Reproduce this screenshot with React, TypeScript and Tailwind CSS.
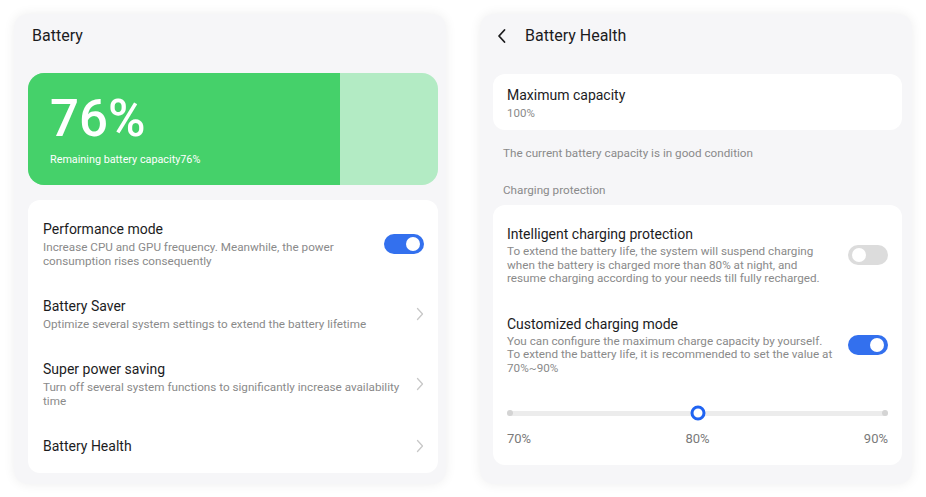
import React from "react";

const font = { fontFamily: "Roboto, 'Noto Sans', sans-serif" };

function Toggle({ on }: { on: boolean }) {
  return (
    <div
      className={`relative h-[20px] w-[40px] shrink-0 rounded-full ${
        on ? "bg-[#3370ee]" : "bg-[#dcdcdc]"
      }`}
    >
      <div
        className={`absolute top-[3px] h-[14px] w-[14px] rounded-full bg-white ${
          on ? "right-[4px]" : "left-[4px]"
        }`}
      />
    </div>
  );
}

function Chevron() {
  return (
    <svg width="8" height="14" viewBox="0 0 8 14" className="shrink-0">
      <path d="M1.5 1.5 L6.5 7 L1.5 12.5" fill="none" stroke="#c8c8c8" strokeWidth="1.3" strokeLinecap="round" strokeLinejoin="round" />
    </svg>
  );
}

function Row({
  title,
  sub,
  right,
}: {
  title: string;
  sub?: React.ReactNode;
  right: React.ReactNode;
}) {
  return (
    <div className="flex items-center justify-between">
      <div className="w-[365px]">
        <div className="text-[14px] leading-[18px] text-[#1c1c1e]">{title}</div>
        {sub && (
          <div className="mt-[2px] text-[11.7px] leading-[14px] text-[#8a8a8a]">{sub}</div>
        )}
      </div>
      {right}
    </div>
  );
}

export default function App() {
  return (
    <div className="flex h-[497px] w-[926px] gap-[34px] bg-white p-[14px] pb-[13px]" style={font}>
      {/* Left panel */}
      <div className="flex w-[432px] flex-col rounded-[14px] bg-[#f6f6f8] pl-[14px] pr-[8px] shadow-[0_0_12px_rgba(0,0,0,0.07)]">
        <div className="flex h-[44px] items-center pl-[4px] text-[16px] text-[#1c1c1e]">Battery</div>
        <div className="mt-[15px] flex h-[112px] overflow-hidden rounded-[16px] bg-[#b3ebc4]">
          <div className="w-[312px] bg-[#45d16a] pl-[22px] pt-[20px] text-white">
            <div className="text-[51px] font-medium leading-[52px]">76%</div>
            <div className="mt-[8px] text-[10.8px] leading-[14px]">Remaining battery capacity76%</div>
          </div>
        </div>
        <div className="mt-[15px] flex flex-col gap-[29px] rounded-[12px] bg-white pb-[18px] pl-[15px] pr-[14px] pt-[20px]">
          <Row
            title="Performance mode"
            sub={
              <>
                Increase CPU and GPU frequency. Meanwhile, the power
                <br />
                consumption rises consequently
              </>
            }
            right={<Toggle on />}
          />
          <Row
            title="Battery Saver"
            sub="Optimize several system settings to extend the battery lifetime"
            right={<Chevron />}
          />
          <Row
            title="Super power saving"
            sub={
              <>
                Turn off several system functions to significantly increase availability
                <br />
                time
              </>
            }
            right={<Chevron />}
          />
          <Row title="Battery Health" right={<Chevron />} />
        </div>
      </div>

      {/* Right panel */}
      <div className="flex w-[432px] flex-col rounded-[14px] bg-[#f6f6f8] pl-[13px] pr-[10px] shadow-[0_0_12px_rgba(0,0,0,0.07)]">
        <div className="flex h-[44px] items-center gap-[18px] pl-[4px] text-[16px] text-[#1c1c1e]">
          <svg width="10" height="16" viewBox="0 0 10 16">
            <path d="M7.5 2 L2 8 L7.5 14" fill="none" stroke="#1c1c1e" strokeWidth="1.8" strokeLinecap="round" strokeLinejoin="round" />
          </svg>
          <span>Battery Health</span>
        </div>
        <div className="mt-[16px] rounded-[12px] bg-white px-[14px] pb-[10px] pt-[12px]">
          <div className="text-[14px] leading-[18px] text-[#1c1c1e]">Maximum capacity</div>
          <div className="mt-[2px] text-[11.5px] leading-[14px] text-[#8a8a8a]">100%</div>
        </div>
        <div className="mt-[16px] pl-[10px] text-[11.7px] leading-[14px] text-[#8a8a8a]">
          The current battery capacity is in good condition
        </div>
        <div className="mt-[23px] pl-[10px] text-[11.7px] leading-[14px] text-[#8a8a8a]">Charging protection</div>
        <div className="mt-[8px] flex flex-col rounded-[12px] bg-white pb-[18px] pl-[14px] pr-[14px] pt-[20px]">
          <div className="flex items-center justify-between">
            <div className="w-[330px]">
              <div className="text-[14px] leading-[18px] text-[#1c1c1e]">Intelligent charging protection</div>
              <div className="mt-[2px] text-[11.7px] leading-[13.5px] text-[#8a8a8a]">
                To extend the battery life, the system will suspend charging
                <br />
                when the battery is charged more than 80% at night, and
                <br />
                resume charging according to your needs till fully recharged.
              </div>
            </div>
            <Toggle on={false} />
          </div>
          <div className="mt-[29px] flex items-center justify-between">
            <div className="w-[330px]">
              <div className="text-[14px] leading-[18px] text-[#1c1c1e]">Customized charging mode</div>
              <div className="mt-[2px] text-[11.7px] leading-[13.5px] text-[#8a8a8a]">
                You can configure the maximum charge capacity by yourself.
                <br />
                To extend the battery life, it is recommended to set the value at
                <br />
                70%~90%
              </div>
            </div>
            <Toggle on />
          </div>
          <div className="relative mt-[31px] flex h-[14px] items-center">
            <div className="h-[5px] w-full rounded-full bg-[#ececec]" />
            <div className="absolute left-0 h-[6px] w-[6px] rounded-full bg-[#d4d4d4]" />
            <div className="absolute right-0 h-[6px] w-[6px] rounded-full bg-[#d4d4d4]" />
            <div className="absolute left-1/2 top-1/2 h-[15px] w-[15px] -translate-x-1/2 -translate-y-1/2 rounded-full border-[3px] border-[#1f63f2] bg-white" />
          </div>
          <div className="mt-[11px] flex justify-between text-[13px] leading-[16px] text-[#7a7a7a]">
            <span>70%</span>
            <span>80%</span>
            <span>90%</span>
          </div>
        </div>
      </div>
    </div>
  );
}
